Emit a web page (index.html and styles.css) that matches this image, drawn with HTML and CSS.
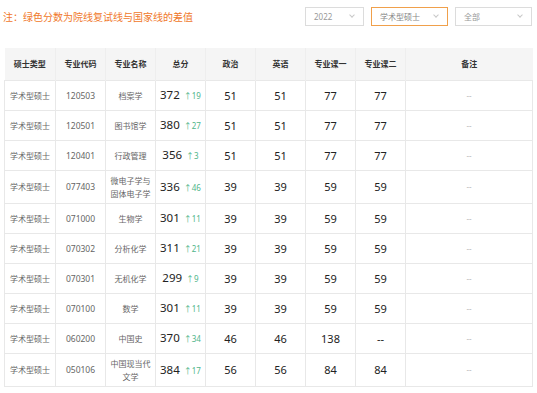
FILE: index.html
```html
<!DOCTYPE html>
<html lang="zh-CN">
<head>
  <meta charset="UTF-8">
  <title>复试线</title>
  <link rel="stylesheet" href="styles.css">
</head>
<body>
<div class="page">
  <!-- 顶部：提示 + 筛选 -->
  <div class="topBar">
    <span class="note">注：绿色分数为院线复试线与国家线的差值</span>
    <div class="filters">
      <div class="select year"><span>2022</span><i class="arrow"></i></div>
      <div class="select type active"><span>学术型硕士</span><i class="arrow"></i></div>
      <div class="select all"><span>全部</span><i class="arrow"></i></div>
    </div>
  </div>
  <!-- 分数表 -->
  <table class="scoreTable">
    <thead>
      <tr>
        <th class="c1">硕士类型</th>
        <th>专业代码</th>
        <th>专业名称</th>
        <th>总分</th>
        <th>政治</th>
        <th>英语</th>
        <th>专业课一</th>
        <th>专业课二</th>
        <th class="cLast">备注</th>
      </tr>
    </thead>
    <tbody>
      <tr><td>学术型硕士</td><td class="code">120503</td><td>档案学</td><td class="total">372 <em>↑19</em></td><td class="num">51</td><td class="num">51</td><td class="num">77</td><td class="num">77</td><td class="remark">--</td></tr>
      <tr><td>学术型硕士</td><td class="code">120501</td><td>图书馆学</td><td class="total">380 <em>↑27</em></td><td class="num">51</td><td class="num">51</td><td class="num">77</td><td class="num">77</td><td class="remark">--</td></tr>
      <tr><td>学术型硕士</td><td class="code">120401</td><td>行政管理</td><td class="total">356 <em>↑3</em></td><td class="num">51</td><td class="num">51</td><td class="num">77</td><td class="num">77</td><td class="remark">--</td></tr>
      <tr><td>学术型硕士</td><td class="code">077403</td><td>微电子学与<br>固体电子学</td><td class="total">336 <em>↑46</em></td><td class="num">39</td><td class="num">39</td><td class="num">59</td><td class="num">59</td><td class="remark">--</td></tr>
      <tr><td>学术型硕士</td><td class="code">071000</td><td>生物学</td><td class="total">301 <em>↑11</em></td><td class="num">39</td><td class="num">39</td><td class="num">59</td><td class="num">59</td><td class="remark">--</td></tr>
      <tr><td>学术型硕士</td><td class="code">070302</td><td>分析化学</td><td class="total">311 <em>↑21</em></td><td class="num">39</td><td class="num">39</td><td class="num">59</td><td class="num">59</td><td class="remark">--</td></tr>
      <tr><td>学术型硕士</td><td class="code">070301</td><td>无机化学</td><td class="total">299 <em>↑9</em></td><td class="num">39</td><td class="num">39</td><td class="num">59</td><td class="num">59</td><td class="remark">--</td></tr>
      <tr><td>学术型硕士</td><td class="code">070100</td><td>数学</td><td class="total">301 <em>↑11</em></td><td class="num">39</td><td class="num">39</td><td class="num">59</td><td class="num">59</td><td class="remark">--</td></tr>
      <tr><td>学术型硕士</td><td class="code">060200</td><td>中国史</td><td class="total">370 <em>↑34</em></td><td class="num">46</td><td class="num">46</td><td class="num">138</td><td class="num">--</td><td class="remark">--</td></tr>
      <tr><td>学术型硕士</td><td class="code">050106</td><td>中国现当代<br>文学</td><td class="total">384 <em>↑17</em></td><td class="num">56</td><td class="num">56</td><td class="num">84</td><td class="num">84</td><td class="remark">--</td></tr>
    </tbody>
  </table>
</div>
</body>
</html>
```

FILE: styles.css
```css
:root {
  --orange: #f0782a;
  --green: #4fb58a;
  --line: #e8e8e8;
  --headBg: #f5f5f5;
  --gray: #666;
  --dark: #222;
}
* {
  box-sizing: border-box;
  font-family: "Noto Sans", "Noto Sans CJK SC", sans-serif;
}
body {
  margin: 0;
  background: #fff;
}
.page {
  width: 537px;
  padding: 0 5px 0 4px;
}
.topBar {
  display: flex;
  align-items: center;
  justify-content: space-between;
  height: 31px;
  padding-top: 1px;
  margin-bottom: 17px;
}
.note {
  color: var(--orange);
  font-size: 10px;
  margin-left: -1px;
}
.filters {
  display: flex;
  gap: 7px;
}
.select {
  display: flex;
  align-items: center;
  justify-content: space-between;
  height: 19px;
  padding: 0 9px 0 8px;
  border: 1px solid #dcdcdc;
  color: #999;
  font-size: 8px;
}
.select.active {
  border-color: #f0a04b;
  color: #888;
}
.year { width: 59px; }
.type { width: 77px; }
.all { width: 77px; }
.arrow {
  width: 4px;
  height: 4px;
  border-right: 1px solid #c8c8c8;
  border-bottom: 1px solid #c8c8c8;
  transform: rotate(45deg);
  margin-top: -3px;
}
.scoreTable {
  width: 528px;
  border-collapse: collapse;
  table-layout: fixed;
  text-align: center;
}
.scoreTable th {
  height: 32px;
  background: var(--headBg);
  color: #333;
  font-size: 8px;
  font-weight: bold;
  border-right: 1px solid #eee;
  padding: 0;
}
.scoreTable th.c1 { width: 51px; }
.scoreTable th { width: 50px; }
.scoreTable th.cLast { width: 127px; border-right: none; }
.scoreTable td {
  height: 30px;
  padding: 3px 2px;
  border: 1px solid var(--line);
  color: var(--gray);
  font-size: 8px;
  line-height: 13px;
}
.scoreTable td.code {
  font-size: 8.5px;
}
.scoreTable td.total {
  color: var(--dark);
  font-size: 11.5px;
  white-space: nowrap;
}
.total em {
  font-style: normal;
  color: var(--green);
  font-size: 8px;
  margin-left: 1px;
}
.scoreTable td.num {
  color: var(--dark);
  font-size: 11px;
}
.scoreTable td.remark {
  color: #bbb;
  font-size: 8px;
}
```
